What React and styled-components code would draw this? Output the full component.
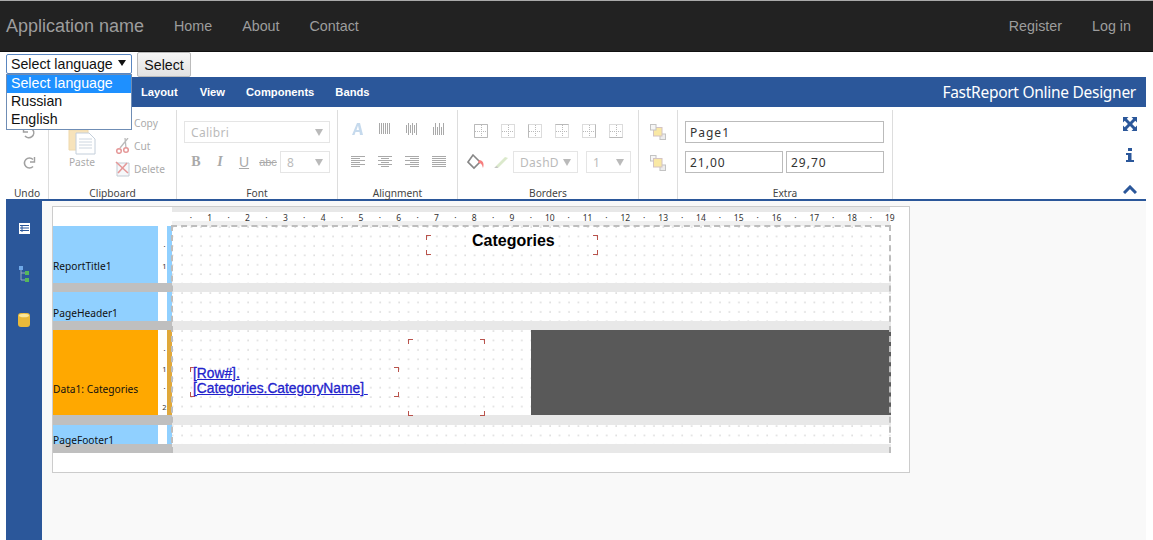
import React from "react";
import styled, { createGlobalStyle } from "styled-components";

const Global = createGlobalStyle`
  html, body { margin: 0; padding: 0; background: #fff; height: 540px; overflow: hidden; }
  body { font-family: "Liberation Sans", Arial, sans-serif; }
  * { box-sizing: border-box; }
`;
const Blue = "#2b579a";
const UI = `"Noto Sans", "Liberation Sans", sans-serif`;

const Navbar = styled.nav`
  height: 52px; background: #222; border-top: 1px solid #aaa; border-bottom: 1px solid #111;
  display: flex; align-items: center; padding: 0 6px; color: #9d9d9d; font-size: 14.3px;
`;
const Brand = styled.span`font-size: 18px; margin-right: 30px; width: 138px; white-space: nowrap;`;
const NavLink = styled.span`margin-right: ${p => p.$gap || 30}px;`;
const NavSpacer = styled.div`flex: 1;`;

const LangRow = styled.div`height: 25px; position: relative; display: flex; align-items: flex-start; padding-left: 6px;`;
const LangSelect = styled.div`
  width: 126px; height: 20px; margin-top: 2px; border: 1px solid #5a86c0; border-radius: 2px; background: #fff;
  display: flex; align-items: center; justify-content: space-between; padding: 0 5px 0 4px;
  font-size: 14.2px; color: #111;
`;
const Caret = styled.span`width: 0; height: 0; border-left: 4px solid transparent; border-right: 4px solid transparent; border-top: 6px solid #111; margin-bottom: 2px;`;
const SelectButton = styled.div`
  width: 54px; height: 25px; margin-left: 5px; border: 1px solid #bbb; border-radius: 2px;
  background: linear-gradient(#f6f6f6, #e2e2e2); display: flex; align-items: center; justify-content: center;
  font-size: 14.2px; color: #111;
`;
const LangMenu = styled.div`
  position: absolute; left: 6px; top: 22px; width: 126px; height: 56px; z-index: 5; background: #fff;
  border: 1px solid #6f8db5; font-size: 14.2px; color: #111;
`;
const LangOption = styled.div`
  height: 18px; line-height: 16px; padding-left: 4px;
  background: ${p => (p.$active ? "#1e90ff" : "#fff")}; color: ${p => (p.$active ? "#fff" : "#111")};
`;

const Designer = styled.div`margin: 0 7px 0 6px; height: 463px; display: flex; flex-direction: column;`;
const MenuBar = styled.div`
  height: 30px; flex: none; background: ${Blue}; color: #fff; display: flex; align-items: center; padding: 0 10px 0 135px;
  font: 700 11.2px "Liberation Sans", sans-serif;
`;
const MenuItem = styled.span`margin-right: ${p => p.$gap}px;`;
const Title = styled.span`margin-left: auto; font: 400 15.5px "Noto Sans", sans-serif; letter-spacing: -.28px;`;

const Ribbon = styled.div`height: 94px; flex: none; display: flex; border-bottom: 2px solid ${Blue}; background: #fff; padding-top: 3px;`;
const Group = styled.section`
  width: ${p => p.$w}px; flex: none; border-right: 1px solid #ddd; display: flex; flex-direction: column;
`;
const GroupBody = styled.div`flex: 1; min-height: 0; opacity: .5; display: flex;`;
const GroupLabel = styled.div`height: 14px; flex: none; text-align: center; font: 400 10.2px/17px ${UI}; color: #444;`;
const UndoCol = styled.div`width: 100%; display: flex; flex-direction: column; align-items: center; padding: 16px 0 0 4px; gap: 16px;`;
const PasteCol = styled.div`width: 66px; display: flex; flex-direction: column; align-items: center; padding-top: 19px; font: 10.2px ${UI}; color: #555;`;
const ClipCol = styled.div`display: flex; flex-direction: column; padding-top: 5px; gap: 7px; font: 10.2px/16px ${UI}; color: #555;`;
const ClipItem = styled.div`display: flex; align-items: center; gap: 3px; height: 16px;`;
const IconSlot = styled.span`width: 16px; height: 16px; display: block; flex: none;`;
const FontCol = styled.div`display: flex; flex-direction: column; padding: 11px 0 0 7px; gap: 8px;`;
const Drop = styled.div`
  width: ${p => p.$w}px; height: 22px; margin-left: ${p => p.$ml || 0}px; border: 1px solid #ccc; display: flex; align-items: center; justify-content: space-between;
  padding: 0 6px; font: 12px ${UI}; color: #777; letter-spacing: .3px; flex: none; background: #fff;
`;
const DropCaret = styled.span`width: 0; height: 0; border-left: 4px solid transparent; border-right: 4px solid transparent; border-top: 7px solid #777;`;
const FmtRow = styled.div`display: flex; align-items: center;`;
const Fmt = styled.span`
  width: ${p => p.$w || 24}px; text-align: center; color: #555; font: ${p => p.$f || "700 14px 'Liberation Serif', serif"};
  text-decoration: ${p => p.$u ? "underline" : p.$s ? "line-through" : "none"};
`;
const IconGrid = styled.div`
  display: grid; grid-template-columns: repeat(${p => p.$cols}, ${p => p.$cw}px); grid-auto-rows: ${p => p.$rh}px;
  padding: ${p => p.$pad}; justify-items: center; align-items: center;
`;
const BorderCol = styled.div`display: flex; flex-direction: column; padding: 10px 0 0 9px; gap: 9px;`;
const BorderRow = styled.div`display: flex; gap: ${p => p.$gap}px; align-items: center; padding-left: ${p => p.$pl || 0}px; height: 22px;`;
const ArrangeCol = styled.div`width: 100%; display: flex; flex-direction: column; align-items: center; padding: 14px 0 0 0; gap: 15px;`;
const ExtraBody = styled.div`flex: 1; min-height: 0; display: flex; flex-direction: column; padding: 11px 0 0 7px; gap: 8px;`;
const Field = styled.div`
  width: ${p => p.$w}px; height: 22px; border: 1px solid #bbb; padding: 0 4px; display: flex; align-items: center;
  font: 12px ${UI}; color: #333; letter-spacing: 1px; background: #fff;
`;
const FieldRow = styled.div`display: flex; gap: 3px;`;
const RightTools = styled.div`margin-left: auto; width: 32px; display: flex; flex-direction: column; align-items: center; padding: 7px 0 0 0; color: ${Blue};`;
const ToolBtn = styled.span`height: ${p => p.$h}px; display: block;`;

const Main = styled.div`flex: 1; display: flex; min-height: 0;`;
const Sidebar = styled.aside`
  width: 36px; flex: none; background: ${Blue}; display: flex; flex-direction: column; align-items: center; padding-top: 4px;
`;
const SideIcon = styled.div`height: 46px; display: flex; align-items: center; justify-content: center;`;
const Workspace = styled.div`flex: 1; background: #f9f9f9; padding: 5px 0 0 10px;`;
const Page = styled.div`width: 858px; height: 267px; background: #fff; border: 1px solid #ccc; display: flex; flex-direction: column;`;
const RulerRow = styled.div`
  height: 19px; margin-left: 119px; width: 718px; padding-left: 9.45px; flex: none; display: flex; align-items: center;
  font: 8.5px "Noto Sans", sans-serif; color: #333;
  background: linear-gradient(#e8e8e8 0 5px, #fff 5px 14px, #f0f0f0 14px);
`;
const Tick = styled.span`width: 18.9px; flex: none; text-align: center; padding-top: 1px;`;
const Bands = styled.div`position: relative; width: 838px;`;
const BandRow = styled.div`display: flex; height: ${p => p.$h}px;`;
const BandLabel = styled.div`
  width: 105px; flex: none; background: ${p => p.$c}; display: flex; align-items: flex-end; padding-bottom: ${p => p.$pb}px;
  font: 10.2px/${p => p.$lh || 14}px "Noto Sans", sans-serif; color: #111; white-space: nowrap;
`;
const VRuler = styled.div`
  width: 9px; flex: none; background: #fff; font: 7.5px "Noto Sans", sans-serif; color: #333;
  display: flex; flex-direction: column; align-items: center; justify-content: flex-end; gap: ${p => p.$gap || 9}px; padding: 0 0 ${p => p.$pb || 2}px 4px;
`;
const BandEdge = styled.div`width: 5px; flex: none; background: ${p => p.$c};`;
const BandCanvas = styled.div`
  flex: 1; position: relative;
  background-color: #fff;
  background-image: radial-gradient(circle at 1px 1px, #d2d2d2 .5px, transparent .9px);
  background-size: 9.45px 9.45px;
  background-position: 9px 0;
`;
const Sep = styled.div`
  height: ${p => p.$h}px;
  background: linear-gradient(90deg, #bfbfbf 0 119px, #e8e8e8 119px);
`;
const DashFrame = styled.div`
  position: absolute; left: 118px; top: -1px; right: 0; bottom: 0; border: 2px dashed #bdbdbd; border-bottom: 0; pointer-events: none;
`;
const Obj = styled.div`
  position: absolute; left: ${p => p.$x}px; top: ${p => p.$y}px; width: ${p => p.$w}px; height: ${p => p.$h}px;
`;
const Corner = styled.i`
  position: absolute; width: 5px; height: 5px; border: 0 solid #b9534c;
  ${p => (p.$t ? "top:0;border-top-width:1.5px;" : "bottom:0;border-bottom-width:1.5px;")}
  ${p => (p.$l ? "left:0;border-left-width:1.5px;" : "right:0;border-right-width:1.5px;")}
`;
const ObjTitle = styled.div`position: absolute; left: 46px; top: -3px; width: 82px; font: 700 16px "Liberation Sans", sans-serif; color: #000; white-space: nowrap;`;
const ObjText = styled.div`
  position: absolute; left: 3px; top: -1px; width: 180px; font: 400 13.8px/15px "Liberation Sans", sans-serif; color: #2222cc; text-decoration: underline;
  white-space: pre; -webkit-text-stroke: .3px #2222cc;
`;
const DarkBlock = styled.div`position: absolute; left: 359px; top: 0; right: 0; bottom: 0; background: #595959;`;

const Corners = () => (
  <>
    <Corner $t $l /><Corner $t /><Corner $l /><Corner />
  </>
);

const Lines = ({ rows }) => (
  <svg width={14} height={14} viewBox="0 0 14 14" stroke="#555" strokeWidth="1">
    {rows.map((r, i) => <path key={i} d={`M${r[0]} ${2.5 + i * 2}H${r[1]}`} />)}
  </svg>
);
const VBars = ({ xs }) => (
  <svg width="14" height="14" viewBox="0 0 14 14" stroke="#555" strokeWidth="1">
    {xs.map((x, i) => <path key={i} d={`M${1.5 + i * 2} ${x[0]}V${x[1]}`} />)}
  </svg>
);
const BorderBox = ({ solid }) => (
  <svg width="14" height="14" viewBox="0 0 14 14" fill="none" stroke="#777">
    <rect x=".5" y=".5" width="13" height="13" strokeDasharray="1 1" />
    <path d="M7.500 1V13M1 7.500H13" strokeDasharray="1 1" />
    {solid && <path d={solid} />}
  </svg>
);
const Layers = ({ front }) => (
  <svg width="16" height="16" viewBox="0 0 16 16">
    <rect x="10" y="10" width="5.500" height="5.500" fill="#ddd" stroke="#888" />
    {front ? (
      <>
        <rect x=".5" y=".5" width="5.500" height="5.500" fill="#eee" stroke="#888" />
        <rect x="3.500" y="3.500" width="8.500" height="8.500" fill="#f4d34c" stroke="#a88" />
      </>
    ) : (
      <>
        <rect x="3.500" y="3.500" width="8.500" height="8.500" fill="#f4d34c" stroke="#a88" />
        <rect x=".5" y=".5" width="5.500" height="5.500" fill="#eee" stroke="#888" />
      </>
    )}
  </svg>
);

const ticks = [];
for (let i = 1; i <= 19; i++) { ticks.push("·"); ticks.push(String(i)); }

export default function App() {
  return (
    <>
      <Global />
      <Navbar>
        <Brand>Application name</Brand>
        <NavLink>Home</NavLink>
        <NavLink>About</NavLink>
        <NavLink>Contact</NavLink>
        <NavSpacer />
        <NavLink $gap={30}>Register</NavLink>
        <NavLink $gap={16}>Log in</NavLink>
      </Navbar>
      <LangRow>
        <LangSelect>Select language<Caret /></LangSelect>
        <SelectButton>Select</SelectButton>
        <LangMenu>
          <LangOption $active>Select language</LangOption>
          <LangOption>Russian</LangOption>
          <LangOption>English</LangOption>
        </LangMenu>
      </LangRow>
      <Designer>
        <MenuBar>
          <MenuItem $gap={22}>Layout</MenuItem>
          <MenuItem $gap={21}>View</MenuItem>
          <MenuItem $gap={21}>Components</MenuItem>
          <MenuItem $gap={0}>Bands</MenuItem>
          <Title>FastReport Online Designer</Title>
        </MenuBar>
        <Ribbon>
          <Group $w={43}>
            <GroupBody>
              <UndoCol>
                <svg width="14" height="14" viewBox="0 0 14 14" fill="none" stroke="#444" strokeWidth="1.6"><path d="M4 2.500A5 5 0 1 1 3 10" /><path d="M1.500 1V6H6" strokeWidth="1.4" /></svg>
                <svg width="14" height="14" viewBox="0 0 14 14" fill="none" stroke="#444" strokeWidth="1.6"><path d="M11 3.500A5 5 0 1 0 11 10.500" /><path d="M12.500 1V6H8" strokeWidth="1.4" /></svg>
              </UndoCol>
            </GroupBody>
            <GroupLabel>Undo</GroupLabel>
          </Group>
          <Group $w={128}>
            <GroupBody>
              <PasteCol>
                <svg width="28" height="26" viewBox="0 0 28 26">
                  <path d="M1 1H20V21H1Z" fill="#f1c97a" stroke="#e0b45f" />
                  <path d="M8 4H21L27 10V25H8Z" fill="#fff" stroke="#8aa0b8" />
                  <path d="M11 10H24M11 13H24M11 16H24M11 19H24" stroke="#9db0c4" />
                </svg>
                <span>Paste</span>
              </PasteCol>
              <ClipCol>
                <ClipItem><IconSlot /> Copy</ClipItem>
                <ClipItem>
                  <IconSlot>
                    <svg width="16" height="16" viewBox="0 0 16 16" fill="none"><path d="M13 0L5 10M10 0L11 10" stroke="#777" strokeWidth="1.3" /><circle cx="4" cy="13" r="2.300" stroke="#c33" strokeWidth="1.5" /><circle cx="11" cy="12" r="2.300" stroke="#c33" strokeWidth="1.5" /></svg>
                  </IconSlot>
                  Cut
                </ClipItem>
                <ClipItem>
                  <IconSlot>
                    <svg width="16" height="16" viewBox="0 0 16 16" fill="none"><path d="M2 2H14V15H2Z" fill="#eef2f6" stroke="#89a" /><path d="M1 1L13 12M12 2L3 12" stroke="#c33" strokeWidth="1.6" /></svg>
                  </IconSlot>
                  Delete
                </ClipItem>
              </ClipCol>
            </GroupBody>
            <GroupLabel>Clipboard</GroupLabel>
          </Group>
          <Group $w={161}>
            <GroupBody>
              <FontCol>
                <Drop $w={146}>Calibri<DropCaret /></Drop>
                <FmtRow>
                  <Fmt>B</Fmt>
                  <Fmt $f="italic 700 14px 'Liberation Serif', serif">I</Fmt>
                  <Fmt $u $f="400 14px 'Liberation Sans', sans-serif">U</Fmt>
                  <Fmt $s $f="400 11px 'Liberation Sans', sans-serif">abc</Fmt>
                  <Drop $w={50}>8<DropCaret /></Drop>
                </FmtRow>
              </FontCol>
            </GroupBody>
            <GroupLabel>Font</GroupLabel>
          </Group>
          <Group $w={120}>
            <GroupBody>
              <IconGrid $cols={4} $cw={27} $rh={32} $pad="3px 0 0 6px">
                <svg width="14" height="14" viewBox="0 0 14 14"><path d="M1 13L6 1H9L12 13H9L8.500 10H4.500L3.500 13Z M5.500 8H8L7 3.500Z" fill="#8fb6dc" fillRule="evenodd" /></svg>
                <VBars xs={[[1,12],[1,12],[1,12],[1,12],[1,12],[1,12]]} />
                <VBars xs={[[3,11],[1,13],[3,11],[1,13],[3,11],[1,13]]} />
                <VBars xs={[[5,13],[1,13],[5,13],[1,13],[5,13],[1,13]]} />
                <Lines rows={[[0,14],[0,9],[0,14],[0,9],[0,14],[0,9]]} />
                <Lines rows={[[0,14],[3,11],[0,14],[3,11],[0,14],[3,11]]} />
                <Lines rows={[[0,14],[5,14],[0,14],[5,14],[0,14],[5,14]]} />
                <Lines rows={[[0,14],[0,14],[0,14],[0,14],[0,14],[0,14]]} />
              </IconGrid>
            </GroupBody>
            <GroupLabel>Alignment</GroupLabel>
          </Group>
          <Group $w={181}>
            <GroupBody>
              <BorderCol>
                <BorderRow $gap={13} $pl={7}>
                  <BorderBox solid="M.5 .5H13.500V13.500H.5Z" />
                  <BorderBox />
                  <BorderBox solid="M.5 .5V13.500" />
                  <BorderBox solid="M.5 .5H13.500" />
                  <BorderBox solid="M13.500 .5V13.500" />
                  <BorderBox solid="M.5 13.500H13.500" />
                </BorderRow>
                <BorderRow $gap={8}>
                  <svg width="18" height="16" viewBox="0 0 18 16"><path d="M6 1L13 8L7 14L1 8Z" fill="#fff" stroke="#111" strokeWidth="1.6" /><path d="M12 6C16 6 17.500 10 16 14C15 10 14 9 11 9Z" fill="#e00" /></svg>
                  <svg width="16" height="14" viewBox="0 0 16 14"><path d="M2 12L12 2L15 3L5 13Z" fill="#b9d59a" /><path d="M1 13L4 11L5 13Z" fill="#888" /></svg>
                  <Drop $w={65} $ml={-4}>DashD<DropCaret /></Drop>
                  <Drop $w={45}>1<DropCaret /></Drop>
                </BorderRow>
              </BorderCol>
            </GroupBody>
            <GroupLabel>Borders</GroupLabel>
          </Group>
          <Group $w={39}>
            <GroupBody>
              <ArrangeCol>
                <Layers />
                <Layers front />
              </ArrangeCol>
            </GroupBody>
            <GroupLabel>&nbsp;</GroupLabel>
          </Group>
          <Group $w={215}>
            <ExtraBody>
              <Field $w={199}>Page1</Field>
              <FieldRow>
                <Field $w={98}>21,00</Field>
                <Field $w={98}>29,70</Field>
              </FieldRow>
            </ExtraBody>
            <GroupLabel>Extra</GroupLabel>
          </Group>
          <RightTools>
            <ToolBtn $h={31}>
              <svg width="14" height="14" viewBox="0 0 14 14" fill="currentColor"><path d="M0 0H5.500L3.800 1.700L7 4.900L10.200 1.700L8.500 0H14V5.500L12.300 3.800L9.100 7L12.300 10.200L14 8.500V14H8.500L10.200 12.300L7 9.100L3.800 12.300L5.500 14H0V8.500L1.700 10.200L4.900 7L1.700 3.800L0 5.500Z" /></svg>
            </ToolBtn>
            <ToolBtn $h={32}>
              <svg width="8" height="14" viewBox="0 0 8 14" fill="currentColor"><rect x="2" y="0" width="4" height="3" /><path d="M0 5H5.500V12H8V14H0V12H2V7H0Z" /></svg>
            </ToolBtn>
            <ToolBtn $h={12}>
              <svg width="14" height="9" viewBox="0 0 14 9" fill="none" stroke="currentColor" strokeWidth="3"><path d="M1 8L7 2L13 8" /></svg>
            </ToolBtn>
          </RightTools>
        </Ribbon>
        <Main>
          <Sidebar>
            <SideIcon>
              <svg width="11" height="11" viewBox="0 0 11 11"><rect width="11" height="11" fill="#fff" /><path d="M3 2.500V9M1 2.500H10M1 5H10M1 7.500H10" stroke="#2b579a" /></svg>
            </SideIcon>
            <SideIcon>
              <svg width="11" height="17" viewBox="0 0 11 17"><rect x="0" y="0" width="4" height="4" fill="#6fa8e8" /><rect x="6" y="5" width="4" height="4" fill="#56b85a" /><rect x="6" y="12" width="4" height="4" fill="#56b85a" /><path d="M2 4V14H6M2 7H6" stroke="#9ab" fill="none" /></svg>
            </SideIcon>
            <SideIcon>
              <svg width="12" height="14" viewBox="0 0 12 14"><rect width="12" height="14" rx="3" fill="#e9b93a" /><ellipse cx="6" cy="2.500" rx="5" ry="1.800" fill="#fbe79a" /></svg>
            </SideIcon>
          </Sidebar>
          <Workspace>
            <Page>
              <RulerRow>
                {ticks.map((t, i) => <Tick key={i}>{t}</Tick>)}
              </RulerRow>
              <Bands>
                <BandRow $h={57}>
                  <BandLabel $c="#90d0ff" $pb={10}>ReportTitle1</BandLabel>
                  <VRuler $gap={10} $pb={12}><span>·</span><span>1</span></VRuler>
                  <BandEdge $c="#90d0ff" />
                  <BandCanvas>
                    <Obj $x={254} $y={9} $w={172} $h={20}>
                      <Corners />
                      <ObjTitle>Categories</ObjTitle>
                    </Obj>
                  </BandCanvas>
                </BandRow>
                <Sep $h={9} />
                <BandRow $h={29}>
                  <BandLabel $c="#90d0ff" $pb={1}>PageHeader1</BandLabel>
                  <VRuler />
                  <BandEdge $c="#90d0ff" />
                  <BandCanvas />
                </BandRow>
                <Sep $h={9} />
                <BandRow $h={85}>
                  <BandLabel $c="#ffa800" $pb={19}>Data1: Categories</BandLabel>
                  <VRuler $gap={9} $pb={3}><span>·</span><span>1</span><span>·</span><span>2</span></VRuler>
                  <BandEdge $c="#e0a83a" />
                  <BandCanvas>
                    <Obj $x={18} $y={37} $w={209} $h={30}>
                      <Corners />
                      <ObjText>{"[Row#]."}<br />{"[Categories.CategoryName] "}</ObjText>
                    </Obj>
                    <Obj $x={236} $y={9} $w={77} $h={77}>
                      <Corners />
                    </Obj>
                    <DarkBlock />
                  </BandCanvas>
                </BandRow>
                <Sep $h={10} />
                <BandRow $h={19}>
                  <BandLabel $c="#90d0ff" $pb={0} $lh={8}>PageFooter1</BandLabel>
                  <VRuler />
                  <BandEdge $c="#90d0ff" />
                  <BandCanvas />
                </BandRow>
                <Sep $h={9} />
                <DashFrame />
              </Bands>
            </Page>
          </Workspace>
        </Main>
      </Designer>
    </>
  );
}
